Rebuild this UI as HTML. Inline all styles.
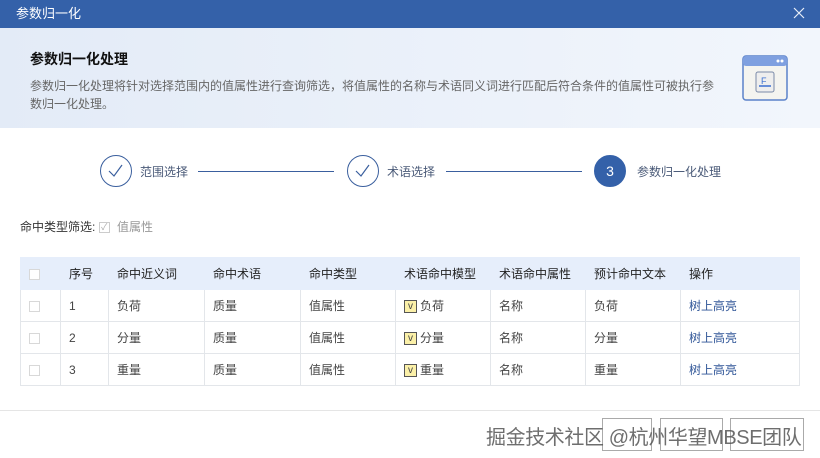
<!DOCTYPE html>
<html><head><meta charset="utf-8"><style>
*{margin:0;padding:0;box-sizing:border-box}
body{width:820px;height:458px;overflow:hidden;background:#fff;font-family:"Liberation Sans","Noto Sans CJK SC",sans-serif;font-size:12px;color:#333;position:relative}
.top{position:absolute;left:0;top:0;width:820px;height:28px;background:#3461a9;color:#fff;font-size:13px;line-height:28px;padding-left:16px}
.x{position:absolute;right:14px;top:6px}
.ban{position:absolute;left:0;top:28px;width:820px;height:100px;background:linear-gradient(90deg,#e3ebf7,#f2f6fc)}
.ban h1{position:absolute;left:30px;top:21px;font-size:14px;font-weight:bold;color:#111}
.ban p{position:absolute;left:30px;top:49px;width:690px;font-size:12px;line-height:18px;color:#666}
.step{position:absolute;top:155px;width:32px;height:32px;border-radius:50%;border:1.5px solid #3a5f9e;background:#fff}
.st{position:absolute;top:163px;font-size:12px;color:#4a5a78}
.line{position:absolute;top:171px;height:1px;background:#3a5f9e}
.flt{position:absolute;left:20px;top:218px;font-size:12px;color:#333}
table{position:absolute;left:20px;top:257px;width:780px;border-collapse:collapse;font-size:12px}
td,th{border:1px solid #e3e6ea;height:32px;text-align:left;padding-left:8px;font-weight:normal}
th{background:#e6eefb;color:#222;border-color:#e6eefb}
td{color:#444}
.cb{display:inline-block;width:11px;height:11px;border:1px solid #d8d8d8;background:#fff;vertical-align:middle}
.v{display:inline-block;width:13px;height:13px;border:1px solid #555;background:#fbf0a8;font-size:10px;line-height:11px;text-align:center;margin-right:3px;vertical-align:middle}
a{color:#2f5597;text-decoration:none}
.foot{position:absolute;left:0;top:410px;width:820px;height:1px;background:#e5e5e5}
.btn{position:absolute;top:418px;height:33px;border:1px solid #aaa;background:#fff}
.wm{position:absolute;left:486px;top:421px;font-size:20px;letter-spacing:-0.4px;color:#555;opacity:.85;white-space:nowrap}
</style></head><body>
<div class="top">参数归一化<svg class="x" width="14" height="14" viewBox="0 0 14 14"><path d="M2 2l10 10M12 2L2 12" stroke="#e8eef8" stroke-width="1.2"/></svg></div>
<div class="ban"><h1>参数归一化处理</h1><p>参数归一化处理将针对选择范围内的值属性进行查询筛选，将值属性的名称与术语同义词进行匹配后符合条件的值属性可被执行参数归一化处理。</p>
<svg style="position:absolute;left:742px;top:27px" width="46" height="46" viewBox="0 0 46 46"><rect x="1" y="1" width="44" height="44" rx="3" fill="#f4f4f0" stroke="#5b82c9" stroke-width="1.5"/><rect x="1" y="1" width="44" height="10" rx="3" fill="#7fa0e0"/><circle cx="36" cy="6" r="1.5" fill="#fff"/><circle cx="40" cy="6" r="1.5" fill="#fff"/><rect x="14" y="17" width="18" height="20" rx="2" fill="#eee" stroke="#7a8aa8"/><text x="19" y="29" font-size="9" fill="#3a6fd0" font-family="Liberation Sans">F</text><line x1="17" y1="31" x2="29" y2="31" stroke="#3a6fd0" stroke-width="1.5"/></svg></div>
<div class="step" style="left:100px"><svg width="29" height="29" viewBox="0 0 29 29"><path d="M8 15l5 5 8-11" fill="none" stroke="#3a5f9e" stroke-width="1.2"/></svg></div>
<div class="st" style="left:140px">范围选择</div>
<div class="line" style="left:198px;width:136px"></div>
<div class="step" style="left:347px"><svg width="29" height="29" viewBox="0 0 29 29"><path d="M8 15l5 5 8-11" fill="none" stroke="#3a5f9e" stroke-width="1.2"/></svg></div>
<div class="st" style="left:387px">术语选择</div>
<div class="line" style="left:446px;width:136px"></div>
<div class="step" style="left:594px;background:#3461a9;border-color:#3461a9;color:#fff;font-size:14px;text-align:center;line-height:30px">3</div>
<div class="st" style="left:637px">参数归一化处理</div>
<div class="flt">命中类型筛选: <span class="cb" style="border-color:#ccc;font-size:9px;line-height:9px;color:#aaa;text-align:center">✓</span> <span style="color:#999;margin-left:4px">值属性</span></div>
<table>
<tr><th style="width:40px"><span class="cb"></span></th><th style="width:48px">序号</th><th style="width:96px">命中近义词</th><th style="width:96px">命中术语</th><th style="width:95px">命中类型</th><th style="width:95px">术语命中模型</th><th style="width:95px">术语命中属性</th><th style="width:95px">预计命中文本</th><th>操作</th></tr>
<tr><td><span class="cb"></span></td><td>1</td><td>负荷</td><td>质量</td><td>值属性</td><td><span class="v">v</span>负荷</td><td>名称</td><td>负荷</td><td><a>树上高亮</a></td></tr>
<tr><td><span class="cb"></span></td><td>2</td><td>分量</td><td>质量</td><td>值属性</td><td><span class="v">v</span>分量</td><td>名称</td><td>分量</td><td><a>树上高亮</a></td></tr>
<tr><td><span class="cb"></span></td><td>3</td><td>重量</td><td>质量</td><td>值属性</td><td><span class="v">v</span>重量</td><td>名称</td><td>重量</td><td><a>树上高亮</a></td></tr>
</table>
<div class="foot"></div>
<div class="btn" style="left:602px;width:50px"></div>
<div class="btn" style="left:660px;width:63px"></div>
<div class="btn" style="left:730px;width:74px"></div>
<div class="wm">掘金技术社区 @杭州华望MBSE团队</div>
</body></html>
